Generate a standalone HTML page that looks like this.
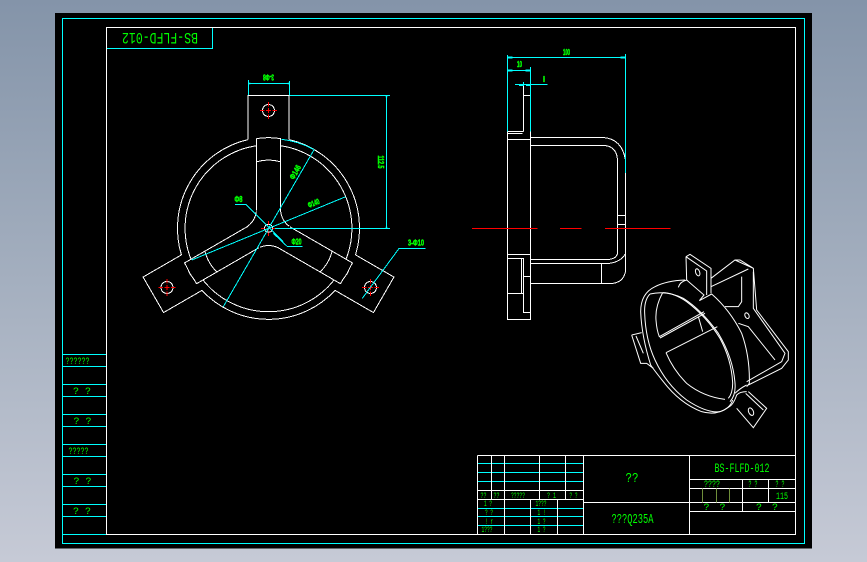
<!DOCTYPE html>
<html><head><meta charset="utf-8"><style>
html,body{margin:0;padding:0;width:867px;height:562px;overflow:hidden;background:linear-gradient(180deg,#8494a9 0%,#a4afbf 50%,#c6cad6 100%)}
svg{position:absolute;left:0;top:0}
.w{stroke:#fff;fill:none;stroke-width:1}
.c{stroke:#00ffff;fill:none;stroke-width:1}
.r{stroke:#ff0000;fill:none;stroke-width:1}
text{fill:#00ff00;font-family:"Liberation Mono",monospace;font-size:10px;text-anchor:middle}
.b{font-family:"Liberation Sans",sans-serif;font-weight:bold;font-size:8px;stroke:#00ff00;stroke-width:.5}
</style></head><body>
<svg width="867" height="562" viewBox="0 0 867 562">
<defs>
<g id="hole"><circle cx="0" cy="0" r="6" class="w"/><path class="r" d="M-8.5 0H-4M-2.500 0H2.500M4 0H8.500M0 -8.500V-4M0 -2.500V2.500M0 4V8.500"/></g>
<g id="arm">
<path class="w" d="M-20.500 -88.700V-133H20.500V-88.700"/>
<path class="w" d="M20.500 -88.700A91 91 0 0 1 87.050 26.600"/>
<path class="w" d="M12 -82.600A83.500 83.500 0 0 1 77.500 30.900"/>
<path class="w" d="M-12 -90Q-6 -90 -3 -90.500T3 -90.500Q6 -90 12 -90V-18Q13 -8 20.500 -2.200"/>
<path class="w" d="M-12 -90V-18"/>
<path class="w" d="M-12 -66.500Q0 -70 12 -66.500"/>
</g>
</defs>
<rect x="55" y="13" width="757" height="535.500" fill="#000"/>
<g shape-rendering="crispEdges">
<rect x="62.500" y="18.500" width="742" height="525" class="c"/>
<path class="c" d="M62.500 354.500H106.500M62.500 366.500H106.500M62.500 384.500H106.500M62.500 396.500H106.500M62.500 414.500H106.500M62.500 426.500H106.500M62.500 444.500H106.500M62.500 456.500H106.500M62.500 474.500H106.500M62.500 486.500H106.500M62.500 504.500H106.500M62.500 516.500H106.500M62.500 534.500H106.500"/>
<rect x="106.500" y="27.500" width="689" height="507" class="w"/>
<path class="c" d="M107 48.500H212.500V28"/>

<!-- title block -->
<path class="c" d="M477.500 463.500H583.500M477.500 472.500H583.500M477.500 481.500H583.500M477.500 508.500H583.500M477.500 516.500H583.500M477.500 525.500H583.500"/>
<path class="w" d="M477.500 455.500H795.500M477.500 455.500V534.500M477.500 490.500H583.500M477.500 499.500H583.500M491.500 455.500V499.500M504.500 455.500V534.500M539.500 455.500V499.500M565.500 455.500V499.500M583.500 455.500V534.500M689.500 455.500V534.500M530.500 499.500V534.500M557.500 499.500V534.500M583.500 502.500H795.500M689.500 479.500H795.500M689.500 488.500H795.500M689.500 511.500H795.500M742.500 479.500V511.500M768.500 479.500V502.500"/>
<path stroke="#6f8f3a" fill="none" d="M702.500 488.500V502.500M716.500 488.500V502.500M729.500 488.500V502.500"/>
</g>

<!-- front view -->
<g shape-rendering="crispEdges">
<g transform="translate(268.500 228.300)"><use href="#arm"/><use href="#arm" transform="rotate(120)"/><use href="#arm" transform="rotate(240)"/></g>
<use href="#hole" x="268.500" y="110.500"/>
<use href="#hole" x="167" y="287.500"/>
<use href="#hole" x="370.500" y="287.500"/>
<g transform="translate(268.500 228.300)"><circle r="4" class="w"/><path class="r" d="M-7.500 0H-4M-2 0H2M4 0H7.500M0 -7.500V-4M0 -2V2M0 4V7.500"/></g>
<path class="c" d="M248.500 80V95M289.500 81V95M248.500 83.500H289.500M289.500 95.500H390M386.500 95.500V228.500M275 228.500H390"/>
<path class="c" d="M281.700 139.300A91 91 0 0 1 313.500 149.300"/>
<path class="c" d="M223.300 306.700L314.300 149.300M191.700 260L345.700 196.700M235 204.500H246L283.300 241.700M302.700 246.500H287.300L273.300 233.300M425.700 248.500H399L362.300 298.300"/>
</g>
<path fill="#00ffff" d="M248.500 82.500l5 1-5 1zM289.500 82.500l-5 1 5 1zM385.500 95.500h2l-1 5zM385.500 228.500h2l-1 -5z"/>
<text class="b" x="268.500" y="80.500" transform="rotate(180 268.500 77.500)" textLength="11" lengthAdjust="spacingAndGlyphs">3-Φ8</text>
<text class="b" x="0" y="3" transform="translate(381 162) rotate(90)" textLength="13" lengthAdjust="spacingAndGlyphs">112.5</text>
<text class="b" x="0" y="3" transform="translate(295 172) rotate(-60)" textLength="15" lengthAdjust="spacingAndGlyphs">Φ146</text>
<text class="b" x="0" y="3" transform="translate(313.500 203) rotate(-22)" textLength="12" lengthAdjust="spacingAndGlyphs">Φ140</text>
<text class="b" x="238.500" y="202" textLength="8" lengthAdjust="spacingAndGlyphs">Φ8</text>
<text class="b" x="296.500" y="244.500" textLength="10" lengthAdjust="spacingAndGlyphs">Φ20</text>
<text class="b" x="416" y="245.500" textLength="16" lengthAdjust="spacingAndGlyphs">3-Φ10</text>

<!-- side view -->
<g shape-rendering="crispEdges">
<path class="w" d="M507.500 131.500V319.500H530.500V131.500M523.500 84V131.500M523.500 95.500H530.500M507.500 131.500H523.500M507.500 133.500H522.500M507.500 139.500H530.500M530.500 137.500H603.500Q622 139 625.500 160V271.500Q623 283.500 610 283.500H530.500M530.500 145.500H605Q617.500 147 617.500 161.500V253.500Q616 259.500 606.500 259.500H530.500M530.500 263.500H608.500Q621 262 625.500 253.500M601.500 263.500V283.500M617.500 215.500H625.500M617.500 224.500H625.500M507.500 254.500H530.500M507.500 258.500H523.500V312.500H530.500M521.500 258.500V293.500M507.500 293.500H523.500M523.500 276.500H530.500"/>
<path class="c" d="M507.500 55V131.500M625.500 54V173M507.500 57.500H625.500M530.500 67V131.500M507.500 70.500H530.500M515 84.500H547.500M523.500 82V84.500"/>
<path class="r" d="M472 228.500H537.500M560 228.500H581.500M605 228.500H670.500"/>
</g>
<path fill="#00ffff" d="M507.500 56.500h5v2h-5zM625.500 56.500h-5v2h5zM507.500 69.500h5v2h-5zM530.500 69.500h-5v2h5zM519 84h5v2h-5zM531 84h-5v2h5z"/>
<text class="b" x="566.500" y="55" textLength="7" lengthAdjust="spacingAndGlyphs">100</text>
<text class="b" x="519.500" y="67" textLength="5" lengthAdjust="spacingAndGlyphs">10</text>
<text class="b" x="544" y="82" textLength="2" lengthAdjust="spacingAndGlyphs">8</text>

<!-- iso view: body -->
<g transform="translate(630 270) scale(.33333)" fill="none" stroke="#fff" stroke-width="3">
<path d="M295 412Q260 438 215 425Q150 400 100 335Q72 300 62 285Q35 200 32 125Q32 70 75 50Q110 32 165 30"/>
<path d="M60 72Q42 90 44 130Q47 210 75 270Q110 345 170 390Q230 430 270 425Q300 415 308 390"/>
<path d="M60 72Q110 60 160 85Q215 120 265 190Q310 265 315 340Q318 375 300 395"/>
<path d="M98 68Q130 68 170 95Q230 140 270 205Q305 270 308 340Q308 370 295 385"/>
<path d="M98 68Q75 110 78 150Q80 180 88 200L222 125M90 204L225 130M205 140L218 185M108 248L262 170M108 248Q130 300 170 340Q220 380 285 388"/>
<path d="M245 72Q300 120 335 190Q360 260 358 340L350 350M208 92L245 72M145 52Q150 35 170 30L222 75L208 92"/>
<path d="M5 195L35 188M5 195L32 280H50L70 295M18 198L40 250"/>
<path d="M315 370Q330 355 350 345M295 412Q310 405 320 375Q330 365 350 365"/>
</g>
<!-- iso view: bracket and tabs -->
<g transform="translate(625 245) scale(.33333)" fill="none" stroke="#fff" stroke-width="3">
<path d="M183 35L195 28L258 70L258 145M183 35L245 78V150M183 35L185 105"/>
<ellipse cx="218" cy="82" rx="6" ry="11" transform="rotate(-20 218 82)"/>
<path d="M258 100L330 45L385 70L395 195L490 320V345L470 370L370 420M258 125L370 72M385 80V190L480 325L470 350L365 410M330 45L345 45L385 70"/>
<path d="M350 95V170L340 185H300"/>
<path d="M340 235L370 245L450 345"/>
<ellipse cx="366" cy="212" rx="6" ry="9" transform="rotate(-25 366 212)"/>
<path d="M370 440L425 490L385 548L335 490M362 445L415 495"/>
<ellipse cx="378" cy="500" rx="7" ry="12" transform="rotate(-25 378 500)"/>
</g>

<!-- title texts -->
<text x="160" y="42" transform="rotate(180 160 37.500)" textLength="76" lengthAdjust="spacingAndGlyphs" style="font-size:16px">BS-FLFD-012</text>
<text x="742" y="472" textLength="55" lengthAdjust="spacingAndGlyphs" style="font-size:13px">BS-FLFD-012</text>
<text x="632" y="482" style="font-size:14px" textLength="13" lengthAdjust="spacingAndGlyphs">??</text>
<text x="632.500" y="523" style="font-size:14px" textLength="42" lengthAdjust="spacingAndGlyphs">???Q235A</text>
<text x="712" y="487" textLength="16" lengthAdjust="spacingAndGlyphs">????</text>
<text x="753" y="487" textLength="9" lengthAdjust="spacingAndGlyphs">? ?</text>
<text x="780" y="487" textLength="9" lengthAdjust="spacingAndGlyphs">? ?</text>
<text x="782" y="499" textLength="12" lengthAdjust="spacingAndGlyphs">115</text>
<text x="706.500" y="510">?</text><text x="722.500" y="510">?</text>
<text x="759" y="510">?</text><text x="775" y="510">?</text>
<text x="483.500" y="498" style="font-size:8px" textLength="6" lengthAdjust="spacingAndGlyphs">??</text>
<text x="496.500" y="498" style="font-size:8px" textLength="6" lengthAdjust="spacingAndGlyphs">??</text>
<text x="518" y="498" style="font-size:8px" textLength="14" lengthAdjust="spacingAndGlyphs">?????</text>
<text x="551.500" y="498" style="font-size:8px" textLength="9" lengthAdjust="spacingAndGlyphs">? 1</text>
<text x="573.500" y="498" style="font-size:8px" textLength="8" lengthAdjust="spacingAndGlyphs">? ?</text>
<text x="488" y="506" style="font-size:8px" textLength="8" lengthAdjust="spacingAndGlyphs">1 ?</text>
<text x="541" y="506" style="font-size:8px" textLength="11" lengthAdjust="spacingAndGlyphs">1???</text>
<text x="489" y="515" style="font-size:8px" textLength="8" lengthAdjust="spacingAndGlyphs">? ?</text>
<text x="541.500" y="515" style="font-size:8px" textLength="8" lengthAdjust="spacingAndGlyphs">1 !</text>
<text x="489" y="524" style="font-size:8px" textLength="8" lengthAdjust="spacingAndGlyphs">! r</text>
<text x="541.500" y="524" style="font-size:8px" textLength="8" lengthAdjust="spacingAndGlyphs">1 ?</text>
<text x="487" y="532" style="font-size:8px" textLength="11" lengthAdjust="spacingAndGlyphs">1???</text>
<text x="541.500" y="532" style="font-size:8px" textLength="8" lengthAdjust="spacingAndGlyphs">1 ?</text>

<text x="77.500" y="364" textLength="24" lengthAdjust="spacingAndGlyphs">??????</text>
<text x="82" y="394">? ?</text>
<text x="82.500" y="424">? ?</text>
<text x="78.500" y="454" textLength="20" lengthAdjust="spacingAndGlyphs">?????</text>
<text x="82.500" y="484">? ?</text>
<text x="82" y="514">? ?</text>
</svg>
</body></html>
